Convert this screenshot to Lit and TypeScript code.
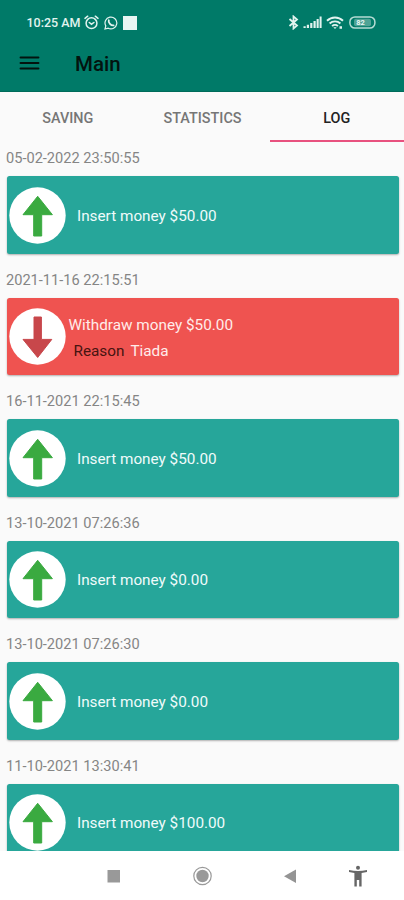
import { LitElement, html, svg, css } from "lit";
import { customElement, property } from "lit/decorators.js";

interface Entry {
  date: string;
  label: string;
  reason?: string;
}

const entries: Entry[] = [
  { date: "05-02-2022 23:50:55", label: "Insert money $50.00" },
  { date: "2021-11-16 22:15:51", label: "Withdraw money $50.00", reason: "Tiada" },
  { date: "16-11-2021 22:15:45", label: "Insert money $50.00" },
  { date: "13-10-2021 07:26:36", label: "Insert money $0.00" },
  { date: "13-10-2021 07:26:30", label: "Insert money $0.00" },
  { date: "11-10-2021 13:30:41", label: "Insert money $100.00" },
];

@customElement("status-bar")
class StatusBar extends LitElement {
  static styles = css`
    :host {
      display: flex;
      align-items: center;
      height: 45px;
      padding: 0 28px 0 26.5px;
      color: #e2f3ef;
      font: 500 12.5px/45px Roboto, sans-serif;
      box-sizing: border-box;
    }
    svg {
      display: block;
      flex: none;
    }
    .time {
      width: 56px;
      white-space: nowrap;
    }
    .alarm { margin-left: 1px; }
    .chat { margin-left: 5px; }
    .square { margin-left: 5px; width: 14px; height: 14px; background: #e8f6f3; }
    .space { flex: 1; }
    .bluetooth { margin-right: 1px; }
    .signal { margin-left: 3px; }
    .wifi { margin-left: 4px; }
    .battery { margin-left: 5px; }
    .level { font: 700 7.5px Roboto, sans-serif; }
  `;
  render() {
    return html`
      <span class="time">10:25 AM</span>
      <svg class="alarm" width="15" height="15" viewBox="0 0 15 15" fill="none" stroke="currentColor" stroke-width="1.5" stroke-linecap="round">
        <circle cx="7.5" cy="8.2" r="5.4" />
        <path d="M1 3.4 3.7 1.2M14 3.4 11.3 1.2M5.3 7.5l2.2 1.7 2.4-1.7" />
      </svg>
      <svg class="chat" width="14" height="14" viewBox="0 0 14 14" fill="none" stroke="currentColor" stroke-width="1.2">
        <path d="M1 13l.8-3.1A5.9 5.9 0 1 1 4.2 12.2z" />
        <path d="M4.8 4.3C4 6.4 7 9.8 9.6 9.4" stroke-width="1.8" stroke-linecap="round" />
      </svg>
      <span class="square"></span>
      <span class="space"></span>
      <svg class="bluetooth" width="11" height="15" viewBox="0 0 11 15" fill="none" stroke="currentColor" stroke-width="1.8">
        <path d="M1.5 4 9 10.6 5.5 13.5V1.5L9 4.4 1.5 11" />
      </svg>
      <svg class="signal" width="19" height="13" viewBox="0 0 19 13" fill="currentColor">
        <path d="M.5 10.3h2.2V12H.5zM3.8 8.8H6V12H3.8zM7.2 7h2.2v5H7.2zM10.5 5h2.2v7h-2.2zM13.6 3h2.1v9h-2.1zM16.6.5h2V12h-2z" />
      </svg>
      <svg class="wifi" width="18" height="14" viewBox="0 0 18 14" fill="none" stroke="currentColor" stroke-width="1.9">
        <path d="M1 4.8a11.5 11.5 0 0 1 16 0M3.6 7.5a7.8 7.8 0 0 1 10.8 0M6.1 10.1a4.2 4.2 0 0 1 5.8 0" />
        <path d="M7.3 11.2h3.4L9 13zM13.5 10.3h2.5v2.5h-2.5z" fill="currentColor" stroke="none" />
      </svg>
      <svg class="battery" width="27" height="13" viewBox="0 0 27 13">
        <rect x="5" y="2.8" width="17" height="7.4" rx="2" fill="#4fa395" />
        <rect x=".9" y=".9" width="25" height="11.2" rx="5" fill="none" stroke="#b5dcd4" stroke-width="1.5" />
        <text class="level" x="7.2" y="9.3" fill="#e9f7f4">82</text>
      </svg>
    `;
  }
}

@customElement("log-entry")
class LogEntry extends LitElement {
  @property({ attribute: false }) entry!: Entry;

  static styles = css`
    :host {
      display: block;
      flex: none;
      height: 121.5px;
      padding: 0 5.5px 0 7px;
      box-sizing: border-box;
      font-family: Roboto, sans-serif;
    }
    .date {
      height: 34.2px;
      margin-left: -1px;
      color: #858585;
      font-size: 14.6px;
      line-height: 33px;
      white-space: nowrap;
    }
    .card {
      display: flex;
      align-items: center;
      height: 77.8px;
      padding-left: 2px;
      box-sizing: border-box;
      border-radius: 2.5px;
      background: #26a69a;
      box-shadow: 0 1px 2px rgba(0, 0, 0, 0.3);
      color: #f0fbfa;
      font-size: 15.3px;
      white-space: nowrap;
    }
    .card.out {
      background: #ef5350;
      color: #ffecea;
    }
    svg {
      display: block;
      flex: none;
    }
    .text { padding: 1px 0 0 11px; }
    .out .text { padding-left: 2.5px; }
    .line { line-height: 26px; }
    .out .line:first-child { padding-top: 2px; }
    .reason { padding-left: 5px; }
    .key { color: #471411; margin-right: 6px; }
  `;
  render() {
    const { date, label, reason } = this.entry;
    const out = reason !== undefined;
    const arrow = out
      ? svg`<path d="M25 9h7.4v22.4h10.4L28.7 49.5 14 31.4h11z" fill="#c8474b" stroke="#c8474b" stroke-linejoin="round" />`
      : svg`<path d="M28.7 9.3 43.4 27.7H32.7V49h-8V27.7H14z" fill="#3aaa40" stroke="#3aaa40" stroke-linejoin="round" />`;
    return html`
      <div class="date">${date}</div>
      <div class="card ${out ? "out" : ""}">
        <svg width="57" height="57" viewBox="0 0 57 57">
          <circle cx="28.5" cy="28.5" r="28.2" fill="#fff" />
          ${arrow}
        </svg>
        <div class="text">
          <div class="line">${label}</div>
          ${out ? html`<div class="line reason"><span class="key">Reason</span><span>${reason}</span></div>` : ""}
        </div>
      </div>
    `;
  }
}

@customElement("app-root")
class AppRoot extends LitElement {
  static styles = css`
    :host {
      display: flex;
      flex-direction: column;
      width: 404px;
      height: 900px;
      overflow: hidden;
      background: #fafafa;
      font-family: Roboto, sans-serif;
    }
    header {
      flex: none;
      height: 92px;
      background: #007a68;
      box-sizing: border-box;
      border-bottom: 1px solid #006b5a;
    }
    .bar {
      display: flex;
      align-items: center;
      height: 38px;
      padding-left: 19px;
    }
    .title {
      margin-left: 35px;
      color: #03130f;
      font-size: 20.5px;
      font-weight: 500;
      line-height: 38px;
    }
    .tabs {
      flex: none;
      display: grid;
      grid-template-columns: 135.5px 134px 134.5px;
      height: 50px;
    }
    .tab {
      box-sizing: border-box;
      height: 49.5px;
      border-bottom: 2px solid transparent;
      padding-top: 2px;
      color: #767676;
      font-size: 14.4px;
      font-weight: 500;
      line-height: 49px;
      text-align: center;
    }
    .tab.active {
      color: #222;
      border-color: #e8517f;
    }
    .list {
      flex: none;
      display: flex;
      flex-direction: column;
      height: 709px;
      overflow: hidden;
    }
    nav {
      flex: 1;
      background: #fff;
    }
    nav svg { display: block; }
  `;
  render() {
    return html`
      <header>
        <status-bar></status-bar>
        <div class="bar">
          <svg width="21" height="16" viewBox="0 0 21 16" stroke="#03130f" stroke-width="2.1" stroke-linecap="round">
            <path d="M1.6 1.5h17.8M1.6 7h17.8M1.6 12.5h17.8" />
          </svg>
          <span class="title">Main</span>
        </div>
      </header>
      <div class="tabs">
        <div class="tab">SAVING</div>
        <div class="tab">STATISTICS</div>
        <div class="tab active">LOG</div>
      </div>
      <div class="list">
        ${entries.map((e) => html`<log-entry .entry=${e}></log-entry>`)}
      </div>
      <nav>
        <svg width="404" height="49" viewBox="0 -1 404 49">
          <rect x="107.5" y="18" width="12.5" height="12.5" fill="#999" />
          <circle cx="202.5" cy="24" r="8.7" fill="#fff" stroke="#999" stroke-width="1.2" />
          <circle cx="202.5" cy="24" r="6.2" fill="#999" />
          <path d="M284 24.2 296 17.5v13.4z" fill="#949494" />
          <circle cx="358" cy="15.7" r="2" fill="#666" />
          <path d="M349 18q9 2 18 0v2l-5.4 1v13.5h-2.4v-6.5h-2.4v6.5h-2.4V21l-5.4-1z" fill="#666" />
        </svg>
      </nav>
    `;
  }
}
